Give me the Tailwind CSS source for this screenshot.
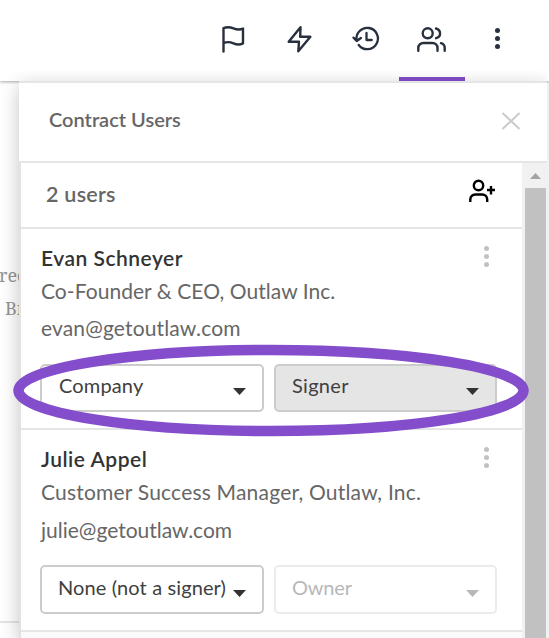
<!DOCTYPE html>
<html lang="en">
<head>
  <meta charset="UTF-8" />
  <meta name="viewport" content="width=device-width, initial-scale=1.0" />
  <title>Contract Users</title>
  <script src="https://cdn.jsdelivr.net/npm/@tailwindcss/browser@4"></script>
</head>

<body class="relative w-[549px] h-[638px] overflow-hidden bg-white font-['Lato',sans-serif] text-[#666] flex flex-col">

  <!-- Toolbar -->
  <header class="relative h-[81px] shrink-0 bg-white shadow-[0_1px_3px_rgba(0,0,0,0.35)] flex justify-end pr-[18px]">
    <button class="w-[66px] h-full pb-[3px] flex items-center justify-center">
      <svg class="w-[30px] h-[30px]" viewBox="0 0 30 30" fill="none" stroke="#28303d" stroke-width="2.4" stroke-linecap="round" stroke-linejoin="round"><path d="M4.500 27.500V4.200c3.200-1.400 6.500-1.200 10 .2s6.500 1.500 9.500.2v14.800c-3 1.600-6 1.600-9.500 0s-7-1.600-10-.3" /></svg>
    </button>
    <button class="w-[66px] h-full pb-[3px] flex items-center justify-center">
      <svg class="w-[30px] h-[30px]" viewBox="0 0 30 30" fill="none" stroke="#28303d" stroke-width="2.4" stroke-linecap="round" stroke-linejoin="round"><path d="M15.500 3.200 3.700 17.700H14L13.300 27.300 25.400 12.800H15.200Z" /></svg>
    </button>
    <button class="w-[66px] h-full pb-[3px] flex items-center justify-center">
      <svg class="w-[30px] h-[30px]" viewBox="0 0 30 30" fill="none" stroke="#28303d" stroke-width="2.3" stroke-linecap="round" stroke-linejoin="round"><path d="M5.700 16.500A10.700 10.700 0 1 1 7.700 21M2.500 13.600l3.200 3.400 4.200-3M15.500 9v7h5.200" /></svg>
    </button>
    <button class="w-[66px] h-full border-b-4 border-[#834dcc] pt-px flex items-center justify-center">
      <svg class="w-[30px] h-[30px]" viewBox="0 0 30 30" fill="none" stroke="#28303d" stroke-width="2.4" stroke-linecap="round"><circle cx="10.700" cy="9.300" r="5" /><path d="M1.300 26.700v-2.700a5 5 0 0 1 5-5h9.200a5 5 0 0 1 5 5v2.700M19 4.500c5.400 1.500 5.400 8.300 0 9.700M24 19.200c2.500.7 3.700 2.400 3.700 4.800v2.700" /></svg>
    </button>
    <button class="w-[66px] h-full pb-[5px] pr-px flex flex-col items-center justify-center gap-[3px]">
      <span class="w-[5px] h-[5px] rounded-full bg-[#28303d]"></span>
      <span class="w-[5px] h-[5px] rounded-full bg-[#28303d]"></span>
      <span class="w-[5px] h-[5px] rounded-full bg-[#28303d]"></span>
    </button>
  </header>

  <div class="flex flex-1 min-h-0">

    <!-- Document behind the panel -->
    <main class="w-[19px] shrink-0 overflow-hidden text-[#949494] font-['Noto_Serif','Liberation_Serif',serif] text-[18px] leading-[33px] whitespace-nowrap">
      <div class="h-[542px] pt-[178px] border-b-2 border-[#e5e5e5]">
        <p class="-ml-px">rec</p>
        <p class="pl-[5px]">Br</p>
      </div>
    </main>

    <!-- Users panel -->
    <aside class="relative w-[528px] shrink-0 flex flex-col bg-white shadow-[0_5px_18px_rgba(0,0,0,0.24)] [clip-path:inset(-10px_0_0_-20px)]">
      <div class="h-[82px] shrink-0 border-y-2 border-[#e5e5e5] flex items-center justify-between pl-[30px] pr-[27px]">
        <h1 class="text-[20px] font-semibold leading-6 whitespace-nowrap pb-[7px]">Contract Users</h1>
        <svg class="w-[18px] h-[18px] -mt-[3px]" viewBox="0 0 18 18" fill="none" stroke="#cbcbcb" stroke-width="2"><path d="M.5 1l17 16M17.500 1l-17 16" /></svg>
      </div>

      <div class="flex flex-1 min-h-0">
        <div class="w-[503px] border-l-2 border-[#e2e2e2] bg-[#fafafa]">

          <div class="h-[66px] bg-white border-b-2 border-[#e5e5e5] flex items-center justify-between pl-[25px] pr-[26px]">
            <h2 class="text-[21.500px] font-semibold leading-6 tracking-[0.25px] whitespace-nowrap pb-0.5">2 users</h2>
            <svg class="w-[28px] h-[26px] -mt-2" viewBox="0 0 28 26" fill="none" stroke="#000" stroke-width="2.4"><circle cx="10.500" cy="7.500" r="4.700" /><path d="M2.300 24v-2.500a5 5 0 0 1 5-5h6.900a5 5 0 0 1 5 5v2.500M19 12h8M23 8v8.500" /></svg>
          </div>

          <section class="h-[201px] bg-white border-b-2 border-[#e5e5e5] pl-[19px] pr-[25px] text-[21px]">
            <div class="flex justify-between h-[45px] pt-[17px] pl-px">
              <h3 class="font-semibold leading-[24px] tracking-[0.5px] text-[#333] whitespace-nowrap">Evan Schneyer</h3>
              <div class="flex flex-col gap-[3px] pr-[8px]">
                <span class="w-[5px] h-[5px] rounded-full bg-[#c1c1c1]"></span>
                <span class="w-[5px] h-[5px] rounded-full bg-[#c1c1c1]"></span>
                <span class="w-[5px] h-[5px] rounded-full bg-[#c1c1c1]"></span>
              </div>
            </div>
            <p class="leading-[34px] pl-px tracking-[0.05px] whitespace-nowrap">Co-Founder &amp; CEO, Outlaw Inc.</p>
            <p class="leading-[38px] pt-px pl-px tracking-[0.15px] whitespace-nowrap">evan@getoutlaw.com</p>
            <div class="flex gap-[10px] pt-[17px] text-[20px] text-[#404040]">
              <div class="w-[224px] h-[48px] border-2 border-[#ccc] rounded-[5px] flex justify-between pl-[17px] pr-[16px]">
                <span class="leading-[38px] tracking-[0.15px] whitespace-nowrap">Company</span>
                <svg class="w-[13px] h-[7px] mt-[22px]" viewBox="0 0 13 7" fill="#333"><path d="M0 0h13L6.500 7z" /></svg>
              </div>
              <div class="w-[223px] h-[48px] border-2 border-[#ccc] bg-[#e5e5e5] rounded-[5px] flex justify-between pl-[16px] pr-[16px]">
                <span class="leading-[38px] tracking-[0.3px] whitespace-nowrap">Signer</span>
                <svg class="w-[13px] h-[7px] mt-[22px]" viewBox="0 0 13 7" fill="#333"><path d="M0 0h13L6.500 7z" /></svg>
              </div>
            </div>
          </section>

          <section class="h-[202px] bg-white border-b-2 border-[#e5e5e5] pl-[19px] pr-[25px] text-[21px]">
            <div class="flex justify-between h-[45px] pt-[17px] pl-px">
              <h3 class="font-semibold leading-[24px] tracking-[0.5px] text-[#333] whitespace-nowrap">Julie Appel</h3>
              <div class="flex flex-col gap-[3px] pr-[8px]">
                <span class="w-[5px] h-[5px] rounded-full bg-[#c1c1c1]"></span>
                <span class="w-[5px] h-[5px] rounded-full bg-[#c1c1c1]"></span>
                <span class="w-[5px] h-[5px] rounded-full bg-[#c1c1c1]"></span>
              </div>
            </div>
            <p class="leading-[34px] pl-px tracking-[0.2px] whitespace-nowrap">Customer Success Manager, Outlaw, Inc.</p>
            <p class="leading-[38px] pt-[2px] pl-px whitespace-nowrap">julie@getoutlaw.com</p>
            <div class="flex gap-[10px] pt-[16px] text-[20px] text-[#404040]">
              <div class="w-[224px] h-[49px] border-2 border-[#ccc] rounded-[5px] flex justify-between pl-[16px] pr-[16px]">
                <span class="leading-[41px] tracking-[0.12px] whitespace-nowrap">None (not a signer)</span>
                <svg class="w-[13px] h-[7px] mt-[23px]" viewBox="0 0 13 7" fill="#333"><path d="M0 0h13L6.500 7z" /></svg>
              </div>
              <div class="w-[223px] h-[49px] border-2 border-[#ebebeb] rounded-[5px] flex justify-between pl-[16px] pr-[16px] text-[#b8b8b8]">
                <span class="leading-[41px] tracking-[-0.2px] whitespace-nowrap">Owner</span>
                <svg class="w-[13px] h-[7px] mt-[23px]" viewBox="0 0 13 7" fill="#b8b8b8"><path d="M0 0h13L6.500 7z" /></svg>
              </div>
            </div>
          </section>
        </div>

        <!-- Scrollbar -->
        <div class="flex-1 bg-[#f1f1f1] flex flex-col pl-[3px] pr-px">
          <svg class="w-[11px] h-[6px] mt-[10px] mb-[9px] ml-[5px] shrink-0" viewBox="0 0 11 6" fill="#a3a3a3"><path d="M0 6h11L5.500 0z" /></svg>
          <div class="flex-1 bg-[#c1c1c1]"></div>
        </div>
      </div>
    </aside>
    <div class="flex-1 bg-[#f1f1f1]"></div>
  </div>

  <!-- Highlight ring over the role selects -->
  <svg class="absolute left-0 top-0 w-[549px] h-[638px] pointer-events-none" viewBox="0 0 549 638" fill="none"><ellipse cx="271" cy="390.500" rx="252.500" ry="40.500" stroke="#834dcc" stroke-width="10.500" /></svg>

</body>
</html>
